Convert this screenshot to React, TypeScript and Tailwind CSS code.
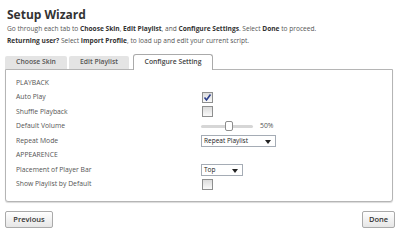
const Check = ({ on = false }: { on?: boolean }) => (
  <span className="flex h-[11px] w-[11px] items-center justify-center border border-[#8e8f8f] bg-gradient-to-b from-[#dcdcdc] to-[#fafafa]">
    {on && (
      <svg width="9" height="9" viewBox="0 0 9 9">
        <path d="M1.5 4.5 L3.5 7 L7.5 1.5" fill="none" stroke="#2b3f8c" strokeWidth="1.6" />
      </svg>
    )}
  </span>
);

const Select = ({ value, w }: { value: string; w: string }) => (
  <div className={`flex h-[12px] items-center justify-between border border-[#a5acb5] bg-white pl-[2px] pr-[4px] ${w}`}>
    <span className="text-[6.5px] leading-none text-[#222]">{value}</span>
    <svg width="6" height="4" viewBox="0 0 6 4" className="mt-[3px]">
      <path d="M0 0 H6 L3 4 Z" fill="#222" />
    </svg>
  </div>
);

const Row = ({ label, children }: { label: string; children?: React.ReactNode }) => (
  <div className="flex h-[14.5px] items-center">
    <span className="w-[185px] text-[#555]">{label}</span>
    <div className="flex items-center">{children}</div>
  </div>
);

export default function App() {
  return (
    <div
      className="h-[240px] w-[400px] bg-white px-[5px] pt-[7px] text-[6.8px] text-[#444]"
      style={{ fontFamily: '"Open Sans", "DejaVu Sans", sans-serif' }}
    >
      <h1 className="pl-[2px] text-[12px] leading-[15px] font-bold text-[#333]">Setup Wizard</h1>
      <div className="mt-[1px] pl-[2px] text-[6.6px] leading-[12px] text-[#555]">
        <p>
          Go through each tab to <b className="text-[#333]">Choose Skin</b>, <b className="text-[#333]">Edit Playlist</b>, and{' '}
          <b className="text-[#333]">Configure Settings</b>. Select <b className="text-[#333]">Done</b> to proceed.
        </p>
        <p>
          <b className="text-[#333]">Returning user?</b> Select <b className="text-[#333]">Import Profile</b>, to load up and edit your current script.
        </p>
      </div>

      <div className="mt-[7px] flex items-end gap-[2px]">
        <div className="flex h-[13px] w-[62px] items-center justify-center rounded-t-[2px] bg-[#e4e4e4] font-semibold text-[#555]">Choose Skin</div>
        <div className="flex h-[13px] w-[60px] items-center justify-center rounded-t-[2px] bg-[#e4e4e4] font-semibold text-[#555]">Edit Playlist</div>
        <div className="relative z-10 -mb-px ml-[2px] flex h-[16px] w-[80px] items-center justify-center rounded-t-[3px] border border-b-0 border-[#aaa] bg-white font-semibold text-[#444]">Configure Setting</div>
      </div>

      <div className="h-[133px] w-[388px] rounded-b-[3px] border border-[#b5b5b5] bg-white px-[10px] pt-[6px] shadow-[0_1px_1px_rgba(0,0,0,0.15)]">
        <div className="flex h-[14px] items-center text-[#555]">PLAYBACK</div>
        <Row label="Auto Play"><span className="ml-[1px]"><Check on /></span></Row>
        <Row label="Shuffle Playback"><span className="ml-[1px]"><Check /></span></Row>
        <Row label="Default Volume">
          <div className="relative flex h-[10px] w-[52px] items-center">
            <div className="h-[3px] w-full rounded bg-[#d6d6d6]" />
            <div className="absolute left-[24px] top-0 h-[10px] w-[8px] rounded-[2px] border border-[#8d8d8d] bg-white" />
          </div>
          <span className="ml-[7px] text-[#555]">50%</span>
        </Row>
        <Row label="Repeat Mode"><Select value="Repeat Playlist" w="w-[75px]" /></Row>
        <div className="flex h-[14.5px] items-center text-[#555]">APPEARENCE</div>
        <Row label="Placement of Player Bar"><Select value="Top" w="w-[42px]" /></Row>
        <Row label="Show Playlist by Default"><span className="ml-[1px]"><Check /></span></Row>
      </div>

      <div className="mt-[9px] flex justify-between">
        <button className="h-[17px] w-[48px] rounded-[2px] border border-[#aaa] bg-gradient-to-b from-white to-[#e6e6e6] text-[7.5px] font-semibold text-[#333]">Previous</button>
        <button className="h-[17px] w-[33px] rounded-[2px] border border-[#aaa] bg-gradient-to-b from-white to-[#e6e6e6] text-[7.5px] font-semibold text-[#333]">Done</button>
      </div>
    </div>
  );
}
